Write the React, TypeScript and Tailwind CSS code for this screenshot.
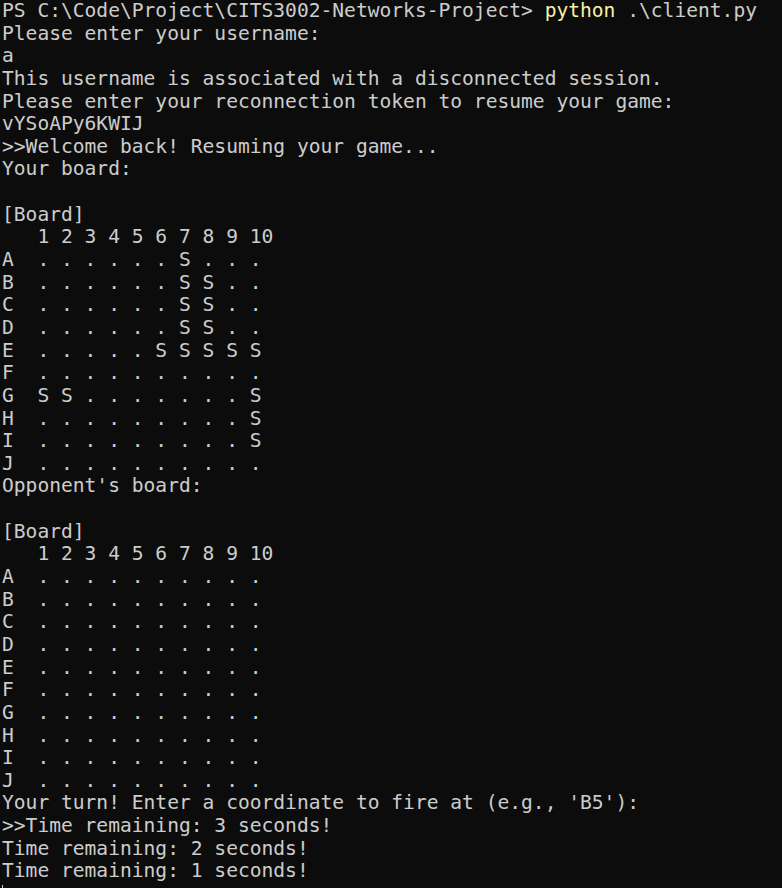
const myBoard = [
  "A  . . . . . . S . . .",
  "B  . . . . . . S S . .",
  "C  . . . . . . S S . .",
  "D  . . . . . . S S . .",
  "E  . . . . . S S S S S",
  "F  . . . . . . . . . .",
  "G  S S . . . . . . . S",
  "H  . . . . . . . . . S",
  "I  . . . . . . . . . S",
  "J  . . . . . . . . . .",
];

const emptyBoard = "ABCDEFGHIJ".split("").map((r) => `${r}  . . . . . . . . . .`);

const header = "   1 2 3 4 5 6 7 8 9 10";

const Line = ({ children }: { children?: React.ReactNode }) => (
  <div className="h-[22.65px] leading-[22.65px] whitespace-pre">{children || " "}</div>
);

export default function App() {
  const lines: string[] = [
    "Please enter your username:",
    "a",
    "This username is associated with a disconnected session.",
    "Please enter your reconnection token to resume your game:",
    "vYSoAPy6KWIJ",
    ">>Welcome back! Resuming your game...",
    "Your board:",
    "",
    "[Board]",
    header,
    ...myBoard,
    "Opponent's board:",
    "",
    "[Board]",
    header,
    ...emptyBoard,
    "Your turn! Enter a coordinate to fire at (e.g., 'B5'):",
    ">>Time remaining: 3 seconds!",
    "Time remaining: 2 seconds!",
    "Time remaining: 1 seconds!",
  ];

  return (
    <div className="w-[782px] h-[888px] overflow-hidden bg-[#0c0c0c] text-[#cccccc] font-['DejaVu_Sans_Mono',monospace] text-[19.6px] pl-[2px]">
      <Line>
        PS C:\Code\Project\CITS3002-Networks-Project&gt; <span className="text-[#f9f1a5]">python</span> .\client.py
      </Line>
      {lines.map((l, i) => (
        <Line key={i}>{l}</Line>
      ))}
      {/* cursor */}
      <div className="h-[22.65px] flex items-start">
        <div className="w-px h-[6px] mt-[2px] bg-[#cccccc]" />
      </div>
    </div>
  );
}
